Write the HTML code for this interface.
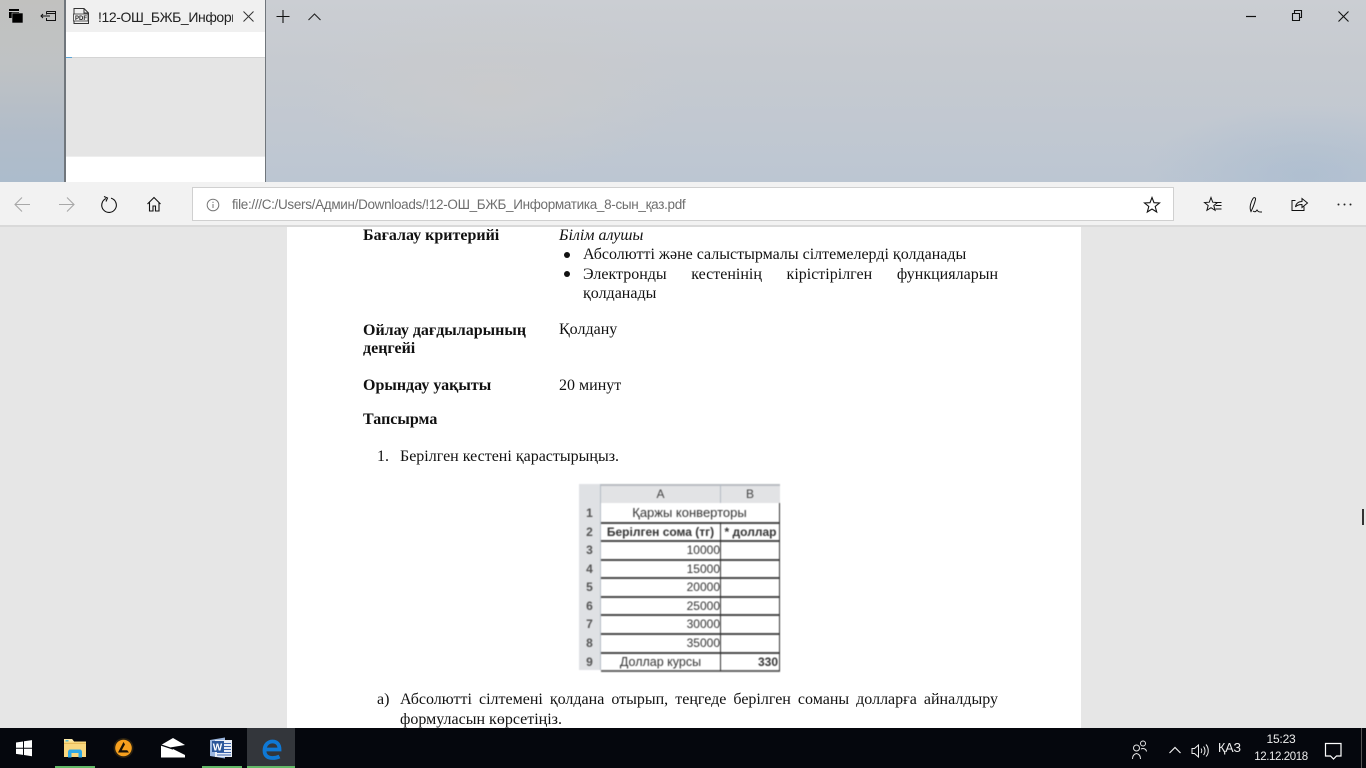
<!DOCTYPE html>
<html lang="kk">
<head>
<meta charset="utf-8">
<title>!12-ОШ_БЖБ_Информатика_8-сын_қаз.pdf</title>
<style>
html,body{margin:0;padding:0;width:1366px;height:768px;overflow:hidden;background:#e6e6e6}
body{position:relative;font-family:"Liberation Sans",sans-serif}
.a{position:absolute;white-space:nowrap}
.bg{position:absolute;left:0;top:0;width:1366px;height:182px;overflow:hidden;background:linear-gradient(180deg,#cbced3 0,#c6cad0 35%,#c1c8d1 70%,#bcc6d2 100%)}
.bg:before{content:"";position:absolute;left:0;top:0;width:65px;height:182px;background:linear-gradient(180deg,#c1c1bf 0,#bfc2c4 35%,#b1bcc9 75%,#acbccc 100%)}
.bg:after{content:"";position:absolute;left:265px;top:0;width:1101px;height:182px;background:radial-gradient(ellipse 190px 90px at 230px 90px,rgba(203,203,203,.75),rgba(203,203,203,0)),radial-gradient(ellipse 160px 70px at 1040px 175px,rgba(172,189,208,.8),rgba(172,189,208,0))}
.tab{position:absolute;left:64px;top:0;width:199px;height:182px;border-left:2px solid #70767c;border-right:1px solid #70767c;background:#fff;z-index:2;box-sizing:content-box}
.tab .h{position:absolute;left:0;top:0;width:199px;height:32px;background:#f0f0f0}
.tab .g{position:absolute;left:0;top:57px;width:199px;height:100px;background:#e5e5e5;border-top:1px solid #d4d4d4;box-sizing:border-box;border-bottom:1px solid #eee}
.tt{left:98px;top:8px;width:135px;overflow:hidden;font-size:14px;line-height:18px;color:#222;z-index:3;letter-spacing:-.4px}
.toolbar{position:absolute;left:0;top:182px;width:1366px;height:45px;background:#f2f2f2;border-bottom:2px solid #d9d9d9;box-sizing:border-box;z-index:3}
.addr{position:absolute;left:192px;top:187px;width:982px;height:34px;background:#fff;border:1px solid #d0d0d0;box-sizing:border-box;z-index:4}
.url{left:232px;top:196px;font-size:13.500px;line-height:18px;color:#6e6e6e;z-index:5;letter-spacing:-.32px}
.page{position:absolute;left:287px;top:227px;width:794px;height:501px;background:#fff}
.t{position:absolute;font-family:"Liberation Serif","DejaVu Serif",serif;font-size:16px;line-height:18px;color:#111;white-space:nowrap}
.b{font-weight:bold}
.j{text-align:justify;text-align-last:justify;white-space:normal}
.dot{position:absolute;width:6px;height:6px;border-radius:50%;background:#111}
.taskbar{position:absolute;left:0;top:728px;width:1366px;height:40px;background:#05070d;z-index:6}
.ul{position:absolute;top:766px;height:2px;width:40px;background:#63b968;z-index:8}
svg{position:absolute;overflow:visible}
.xl{position:absolute;left:579px;top:484px;width:201px;height:188px;background:#fff;overflow:hidden;filter:blur(.5px);font-family:"Liberation Sans",sans-serif;font-size:12px;color:#333}
.xl div{position:absolute;line-height:18px;white-space:nowrap}
.xl .n{left:0;width:21px;text-align:center;font-weight:bold;color:#555;font-size:12px}
.xl .r{right:60px;font-size:12px}
.xl .l{left:22px;width:179px;height:1.500px;background:#4a4a4a}
</style>
</head>
<body>
<div class="bg"></div>
<div class="tab"><div class="h"></div><div class="g"></div><div style="position:absolute;left:0;top:57px;width:6px;height:1px;background:#5aa5d8"></div></div>

<!-- top icons -->
<svg style="left:0;top:0;z-index:4" width="120" height="32" viewBox="0 0 120 32">
<rect x="9" y="9" width="10" height="9" fill="#000"/><rect x="9" y="11" width="10" height="1" fill="#ccc"/>
<rect x="12" y="13" width="11" height="10" fill="#000" stroke="#c2c3c2" stroke-width=".6"/>
<path d="M46.500 11.500h9v9h-9v-2.500M46.500 14.500v-3M46.500 13.500h9" fill="none" stroke="#111" stroke-width="1"/>
<path d="M41 16h9M43 14l-2 2 2 2" fill="none" stroke="#111" stroke-width="1"/>
</svg>
<svg style="left:70px;top:0;z-index:4" width="24" height="32" viewBox="0 0 24 32">
<path d="M4 23.500V8.500h10l4.500 4.500v10.500z" fill="none" stroke="#333" stroke-width="1"/><path d="M14 8.500V13h4.500" fill="none" stroke="#333"/>
<rect x="3.500" y="14" width="14.500" height="7" fill="#f0f0f0" stroke="#333" stroke-width=".8"/>
<text x="5" y="20" font-family="Liberation Sans" font-size="6" font-weight="bold" fill="#222">PDF</text>
</svg>
<div class="a tt">!12-ОШ_БЖБ_Информатика</div>
<svg style="left:240px;top:8px;z-index:4" width="16" height="16" viewBox="0 0 16 16"><path d="M3.500 3.500l10 10M13.500 3.500l-10 10" stroke="#333" stroke-width="1" fill="none"/></svg>
<svg style="left:270px;top:0;z-index:4" width="60" height="32" viewBox="0 0 60 32"><path d="M6.500 16.500h13M13 10v13" stroke="#111" stroke-width="1.100" fill="none"/><path d="M38.500 20l6-6 6 6" stroke="#222" stroke-width="1.100" fill="none"/></svg>
<svg style="left:1240px;top:0;z-index:4" width="126" height="32" viewBox="0 0 126 32">
<path d="M6 16.500h10" stroke="#111" stroke-width="1.200"/>
<path d="M52.500 13.500h7v7h-7zM54.500 13v-2.500h7v7H60" fill="none" stroke="#111" stroke-width="1.100"/>
<path d="M98.500 11.500l10 10M108.500 11.500l-10 10" stroke="#111" stroke-width="1.100"/>
</svg>

<!-- toolbar -->
<div class="toolbar"></div>
<div class="addr"></div>
<svg style="left:0;top:182px;z-index:5" width="180" height="44" viewBox="0 0 180 44">
<path d="M15 22.500h15M22 15.500l-7 7 7 7" fill="none" stroke="#a8a8a8" stroke-width="1.100"/>
<path d="M59 22.500h15M67 15.500l7 7-7 7" fill="none" stroke="#a8a8a8" stroke-width="1.100"/>
<path d="M106 16.500a7.300 7.300 0 1 0 5-.4" fill="none" stroke="#111" stroke-width="1.100"/><path d="M104 15l3.500 1.500L106 20" fill="none" stroke="#111" stroke-width="1.100" transform="translate(0 -.5)"/>
<path d="M147.500 22l6.500-6.500 6.500 6.500M149.500 20.500v8.500h3.500v-5h2.500v5h3.500v-8.500" fill="none" stroke="#111" stroke-width="1.100"/>
</svg>
<svg style="left:205px;top:196px;z-index:5" width="16" height="18" viewBox="0 0 16 18"><circle cx="8" cy="9" r="5.800" fill="none" stroke="#777" stroke-width="1"/><path d="M8 8v4M8 5.800v1.200" stroke="#777" stroke-width="1"/></svg>
<div class="a url">file:///C:/Users/Админ/Downloads/!12-ОШ_БЖБ_Информатика_8-сын_қаз.pdf</div>
<svg style="left:1140px;top:192px;z-index:5" width="226" height="26" viewBox="0 0 226 26">
<path d="M12 5.500l2 5.200 5.500.3-4.300 3.500 1.500 5.500-4.700-3-4.700 3 1.500-5.500L4.500 11l5.500-.3z" fill="none" stroke="#111" stroke-width="1.100"/>
<path d="M71 5.500l1.700 4.700 4.800.3-3.700 3 1.300 4.800-4.100-2.600-4.100 2.600 1.300-4.800-3.700-3 4.800-.3zM75 10.500h6.500M75.500 13.500h6M75.500 17h6" fill="none" stroke="#111" stroke-width="1"/>
<path d="M111 19.500c-2-4 0-10 2-13 1-1.500 3-1 2.500 1-.8 3.500-2.500 8-4.500 12zM113 19c2 1.500 3 .5 4-1 1.500 2.500 3 2 5 2" fill="none" stroke="#111" stroke-width="1"/>
<path d="M155.500 8.500h-3.500v10h12v-4M155.500 15c.5-3.500 3-5.500 6.500-5.500V6.500l5.500 4.500-5.500 4.500v-3c-2.500 0-5 .5-6.500 2.500z" fill="none" stroke="#111" stroke-width="1"/>
<circle cx="198.500" cy="12.500" r="1" fill="#222"/><circle cx="204.500" cy="12.500" r="1" fill="#222"/><circle cx="210.500" cy="12.500" r="1" fill="#222"/>
</svg>

<!-- pdf page -->
<div class="page"></div>
<div class="t b" style="left:363px;top:227px">Бағалау критерийі</div>
<div class="t" style="left:559px;top:227px;font-style:italic">Білім алушы</div>
<div class="dot" style="left:564px;top:252px"></div>
<div class="t" style="left:583px;top:246px">Абсолютті және салыстырмалы сілтемелерді қолданады</div>
<div class="dot" style="left:564px;top:271px"></div>
<div class="t j" style="left:583px;top:266px;width:415px">Электронды кестенінің кірістірілген функцияларын</div>
<div class="t" style="left:583px;top:285px">қолданады</div>
<div class="t b" style="left:363px;top:322px">Ойлау дағдыларының</div>
<div class="t b" style="left:363px;top:340px">деңгейі</div>
<div class="t" style="left:559px;top:321px">Қолдану</div>
<div class="t b" style="left:363px;top:377px">Орындау уақыты</div>
<div class="t" style="left:559px;top:377px">20 минут</div>
<div class="t b" style="left:363px;top:411px">Тапсырма</div>
<div class="t" style="left:377px;top:448px">1.</div>
<div class="t" style="left:400px;top:448px">Берілген кестені қарастырыңыз.</div>

<div class="xl">
<div style="left:0;top:0;width:201px;height:19px;background:#e2e3e5;border-top:2px solid #b9bdc2;box-sizing:border-box"></div>
<div style="left:0;top:0;width:22px;height:186px;background:#dfe1e4"></div>
<div style="left:21px;top:0;width:1px;height:186px;background:#b5bcc5"></div>
<div style="left:141px;top:0;width:1px;height:19px;background:#b5bcc5"></div>
<div style="left:22px;top:1px;width:119px;text-align:center;color:#444;font-size:12px">A</div>
<div style="left:142px;top:1px;width:58px;text-align:center;color:#444;font-size:12px">B</div>
<div class="n" style="top:20px">1</div>
<div class="n" style="top:39px">2</div>
<div class="n" style="top:57px">3</div>
<div class="n" style="top:76px">4</div>
<div class="n" style="top:94px">5</div>
<div class="n" style="top:113px">6</div>
<div class="n" style="top:131px">7</div>
<div class="n" style="top:150px">8</div>
<div class="n" style="top:169px">9</div>
<div style="left:22px;top:20px;width:177px;text-align:center;font-size:13px">Қаржы конверторы</div>
<div style="left:22px;top:39px;width:119px;text-align:center;font-weight:bold;font-size:12px">Берілген сома (тг)</div>
<div style="left:142px;top:39px;width:59px;text-align:center;font-weight:bold;font-size:12px">* доллар</div>
<div class="r" style="top:57px">10000</div>
<div class="r" style="top:76px">15000</div>
<div class="r" style="top:94px">20000</div>
<div class="r" style="top:113px">25000</div>
<div class="r" style="top:131px">30000</div>
<div class="r" style="top:150px">35000</div>
<div style="left:22px;top:169px;width:119px;text-align:center;font-size:12.500px">Доллар курсы</div>
<div style="right:2px;top:169px;font-weight:bold">330</div>
<div class="l" style="top:38px"></div>
<div class="l" style="top:56px"></div>
<div class="l" style="top:75px"></div>
<div class="l" style="top:93px"></div>
<div class="l" style="top:112px"></div>
<div class="l" style="top:130px"></div>
<div class="l" style="top:149px"></div>
<div class="l" style="top:168px"></div>
<div class="l" style="top:186px;background:#666"></div>
<div style="left:141px;top:38px;width:1px;height:149px;background:#333"></div>
<div style="left:199.500px;top:19px;width:1px;height:168px;background:#333"></div>
</div>

<div class="t" style="left:377px;top:691px">a)</div>
<div class="t j" style="left:400px;top:691px;width:598px">Абсолютті сілтемені қолдана отырып, теңгеде берілген соманы долларға айналдыру</div>
<div class="t" style="left:400px;top:711px">формуласын көрсетіңіз.</div>
<div style="position:absolute;left:1362px;top:509px;width:2px;height:16px;background:#333"></div>

<!-- taskbar -->
<div class="taskbar"></div>
<div style="position:absolute;left:247px;top:728px;width:48px;height:40px;background:#33363b;z-index:6"></div>
<div class="ul" style="left:55px"></div>
<div class="ul" style="left:202px"></div>
<div class="ul" style="left:247px;width:48px"></div>
<svg style="left:0;top:728px;z-index:7" width="300" height="40" viewBox="0 0 300 40">
<path d="M16 14.500l7-1v6.200h-7zM24 13.300l8-1.200v7.600h-8zM16 20.700h7v6.200l-7-1zM24 20.700h8v7.500l-8-1.200z" fill="#fff"/>
<path d="M64 11h8l2 2.500h12v15.500H64z" fill="#f9d77e"/>
<path d="M64 11h8l2 2.500h-10z" fill="#fdeaa8"/><rect x="65.500" y="12" width="3" height="1.500" fill="#5fc0d0"/>
<path d="M64 15h22v1H64z" fill="#e8bc5a"/>
<path d="M68 29v-5c0-1.500 1-2.500 2-2.500h10c1 0 2 1 2 2.500v5h-3.500v-4h-7v4z" fill="#2ea8e6"/>
<rect x="68" y="28" width="3.500" height="1.500" fill="#2ea8e6"/><rect x="78.500" y="28" width="3.500" height="1.500" fill="#2ea8e6"/>
<circle cx="123.500" cy="20" r="10" fill="#2b2110"/><circle cx="123.500" cy="20" r="8.300" fill="#f7a01e"/>
<path d="M123.500 14l-5.500 10.500h11l-1.800-2.200h-5.400l1.700-3.300 1.500-2.500z" fill="#1a1206"/>
<path d="M161 17l12-7 12 7v12.500h-24z" fill="#fff"/>
<path d="M161 17l12 4" fill="none" stroke="#05070d" stroke-width="1.200"/><path d="M170 19.500l15-2.500v10z" fill="#05070d"/>
<path d="M210 12l15-2.500v21l-15-2.500z" fill="#9bb6de"/>
<rect x="215" y="12" width="17" height="17" fill="#e9eef6"/>
<path d="M224 15.500h7M224 18.500h7M224 21.500h7M217 24.500h14M217 27h14" stroke="#3a64ad" stroke-width="1"/>
<rect x="212" y="13" width="12" height="11" fill="#2b579a"/>
<text x="212.700" y="22.500" font-family="Liberation Sans" font-size="10" font-weight="bold" fill="#fff">W</text>
<path d="M265.500 21.500h14c0-5.500-3-8-7-8s-8 3-8 9 4 7.500 8 7.500c2.500 0 5-.5 7-1.500" fill="none" stroke="#0f78d4" stroke-width="3.800"/>
</svg>
<svg style="left:1110px;top:728px;z-index:7" width="256" height="40" viewBox="0 0 256 40">
<circle cx="26.500" cy="20" r="3" fill="none" stroke="#e6e6e6" stroke-width="1"/><path d="M22.500 31c0-3 1.500-5 4-5.500 2.500.5 4 2.500 4 5.500" fill="none" stroke="#e6e6e6" stroke-width="1"/>
<circle cx="33" cy="15.500" r="2.500" fill="none" stroke="#e6e6e6" stroke-width="1"/><path d="M31 21c2-1 5-.5 5.500 2.500" fill="none" stroke="#e6e6e6" stroke-width="1"/>
<path d="M59.500 25l5.500-5.500 5.500 5.500" fill="none" stroke="#eee" stroke-width="1.200"/>
<path d="M82 20.500h2.500l4-3.500v12l-4-3.500H82z" fill="none" stroke="#eee" stroke-width="1"/>
<path d="M91 20.500c1 1.300 1 3.200 0 4.500M93.500 18.500c2 2.500 2 6 0 8.500M96 16.500c3 3.500 3 9 0 12" fill="none" stroke="#eee" stroke-width="1"/>
<path d="M215.500 15.500h15.500v12.500h-4.500l-3 3-3-3h-5z" fill="none" stroke="#fff" stroke-width="1.200"/>
<path d="M251.500 0v40" stroke="#555" stroke-width="1"/>
</svg>
<div class="a" style="left:1218px;top:740px;font-size:12.500px;line-height:16px;color:#eee;z-index:7">ҚАЗ</div>
<div class="a" style="left:1251px;top:731px;width:60px;text-align:center;font-size:12px;line-height:16px;color:#eee;z-index:7;letter-spacing:-.2px">15:23</div>
<div class="a" style="left:1251px;top:749px;width:60px;text-align:center;font-size:11.500px;line-height:16px;color:#eee;z-index:7;letter-spacing:-.4px">12.12.2018</div>
</body>
</html>
